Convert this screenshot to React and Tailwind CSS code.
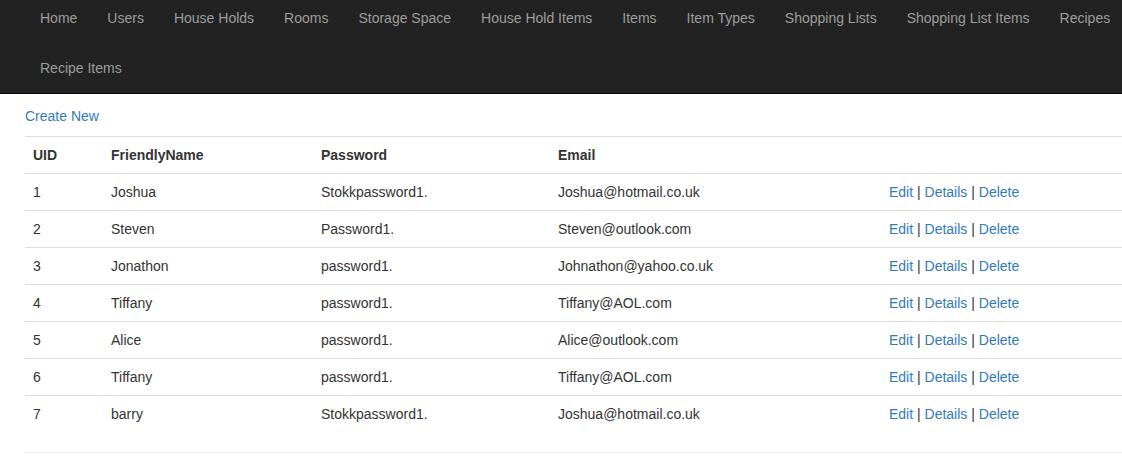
const NAV_ROWS = [
  ['Home', 'Users', 'House Holds', 'Rooms', 'Storage Space', 'House Hold Items', 'Items', 'Item Types', 'Shopping Lists', 'Shopping List Items', 'Recipes'],
  ['Recipe Items'],
];

const USERS = [
  { id: 1, name: 'Joshua', password: 'Stokkpassword1.', email: 'Joshua@hotmail.co.uk' },
  { id: 2, name: 'Steven', password: 'Password1.', email: 'Steven@outlook.com' },
  { id: 3, name: 'Jonathon', password: 'password1.', email: 'Johnathon@yahoo.co.uk' },
  { id: 4, name: 'Tiffany', password: 'password1.', email: 'Tiffany@AOL.com' },
  { id: 5, name: 'Alice', password: 'password1.', email: 'Alice@outlook.com' },
  { id: 6, name: 'Tiffany', password: 'password1.', email: 'Tiffany@AOL.com' },
  { id: 7, name: 'barry', password: 'Stokkpassword1.', email: 'Joshua@hotmail.co.uk' },
];

const cell = 'border-t border-[#ddd] px-2 py-2 text-left align-top leading-5';

export default function App() {
  return (
    <div className="w-[1122px] min-h-[460px] overflow-hidden bg-white text-[14px] text-[#333] font-['Liberation_Sans',Arial,sans-serif]">
      <nav className="h-[94px] overflow-hidden border-b border-[#080808] bg-[#222]">
        <div className="-mt-[7px] pl-[25px]">
          {NAV_ROWS.map((row, i) => (
            <ul key={i} className="flex whitespace-nowrap">
              {row.map((label) => (
                <li key={label}>
                  <a href="#" className="block px-[15px] py-[15px] leading-5 text-[#9d9d9d]">
                    {label}
                  </a>
                </li>
              ))}
            </ul>
          ))}
        </div>
      </nav>

      <div className="pl-[25px] pt-3">
        <p className="mb-[10px] leading-5">
          <a href="#" className="text-[#337ab7]">Create New</a>
        </p>

        <table className="w-[1130px] table-fixed border-collapse">
          <colgroup>
            <col className="w-[78px]" />
            <col className="w-[210px]" />
            <col className="w-[237px]" />
            <col className="w-[331px]" />
            <col />
          </colgroup>
          <thead>
            <tr>
              <th className={cell + ' font-bold'}>UID</th>
              <th className={cell + ' font-bold'}>FriendlyName</th>
              <th className={cell + ' font-bold'}>Password</th>
              <th className={cell + ' font-bold'}>Email</th>
              <th className={cell}></th>
            </tr>
          </thead>
          <tbody>
            {USERS.map((u) => (
              <tr key={u.id}>
                <td className={cell}>{u.id}</td>
                <td className={cell}>{u.name}</td>
                <td className={cell}>{u.password}</td>
                <td className={cell}>{u.email}</td>
                <td className={cell}>
                  <a href="#" className="text-[#337ab7]">Edit</a> |{' '}
                  <a href="#" className="text-[#337ab7]">Details</a> |{' '}
                  <a href="#" className="text-[#337ab7]">Delete</a>
                </td>
              </tr>
            ))}
          </tbody>
        </table>

        <hr className="mt-5 w-[1130px] border-t border-[#eee]" />
      </div>
    </div>
  );
}
